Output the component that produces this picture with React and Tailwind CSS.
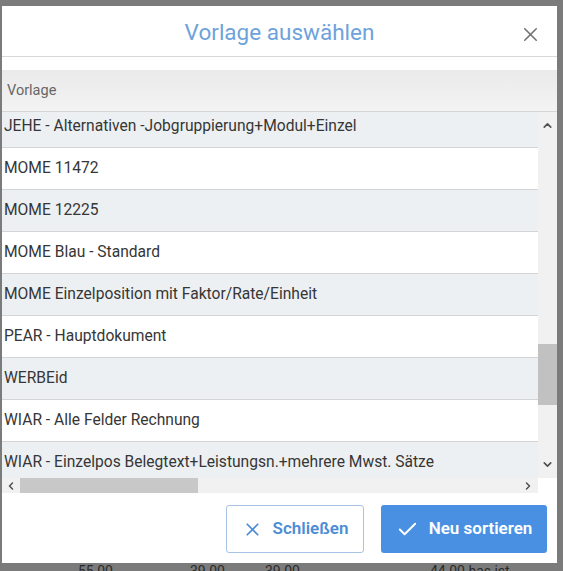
import { X, Check, ChevronUp, ChevronDown, ChevronLeft, ChevronRight } from "lucide-react";

const rows = [
  "JEHE - Alternativen -Jobgruppierung+Modul+Einzel",
  "MOME 11472",
  "MOME 12225",
  "MOME Blau - Standard",
  "MOME Einzelposition mit Faktor/Rate/Einheit",
  "PEAR - Hauptdokument",
  "WERBEid",
  "WIAR - Alle Felder Rechnung",
  "WIAR - Einzelpos Belegtext+Leistungsn.+mehrere Mwst. Sätze",
];

export default function App() {
  return (
    <div className="w-[563px] h-[571px] bg-[#7b7b7b] flex flex-col overflow-hidden font-['Roboto',sans-serif]">
      <div className="flex pt-[6px] pl-[2px]">
        <div className="w-[555px] h-[557px] bg-white flex flex-col">
          {/* header */}
          <div className="h-[51px] flex items-center relative border-b border-[#d8d8d8]">
            <h1 className="flex-1 text-center text-[22.5px] text-[#6ea2dc] pt-[4px]">
              Vorlage auswählen
            </h1>
            <button className="absolute right-[15px] top-[17px] text-[#707070]">
              <X size={23} strokeWidth={1.6} />
            </button>
          </div>
          <div className="h-[13px]" />
          {/* table header */}
          <div className="h-[42px] flex items-center pl-[5px] pt-[1px] bg-gradient-to-b from-[#eaeaea] to-[#f3f3f3] border-b border-[#d6d6d6] text-[14.5px] text-[#666]">
            Vorlage
          </div>
          {/* body */}
          <div className="flex h-[366px]">
            <div className="w-[536px] overflow-hidden">
              <div className="-mt-[6px]">
                {rows.map((r, i) => (
                  <div
                    key={r}
                    className={`h-[42px] flex items-center pl-[2px] border-b border-[#d4d4d4] text-[15.6px] text-[#363636] whitespace-nowrap ${
                      i % 2 === 0 ? "bg-[#edf0f2]" : "bg-white"
                    }`}
                  >
                    {r}
                  </div>
                ))}
              </div>
            </div>
            <div className="w-[19px] bg-[#f1f1f1] flex flex-col items-center">
              <ChevronUp size={13} strokeWidth={3} className="text-[#505050] mt-[7px]" />
              <div className="flex-1 w-full relative">
                <div className="absolute left-0 right-0 top-[212px] h-[61px] bg-[#c1c1c1]" />
              </div>
              <ChevronDown size={13} strokeWidth={3} className="text-[#505050] mb-[7px]" />
            </div>
          </div>
          {/* horizontal scrollbar */}
          <div className="flex h-[15px]">
            <div className="w-[536px] bg-[#f1f1f1] flex items-center">
              <ChevronLeft size={12} strokeWidth={3} className="text-[#505050] ml-[3px]" />
              <div className="w-[178px] h-[15px] bg-[#c8c8c8] ml-[3px]" />
              <div className="flex-1" />
              <ChevronRight size={12} strokeWidth={3} className="text-[#505050] mr-[4px]" />
            </div>
            <div className="w-[19px] bg-white" />
          </div>
          {/* footer */}
          <div className="flex-1 flex items-start justify-end gap-[17px] pt-[12px] pr-[10px]">
            <button className="w-[138px] h-[48px] flex items-center justify-center gap-[10px] border border-[#a7c3e6] rounded-[3px] text-[#4d8dd6] text-[17px] font-semibold">
              <X size={21} strokeWidth={2} />
              Schließen
            </button>
            <button className="w-[166px] h-[48px] flex items-center justify-center gap-[10px] bg-[#4a90e2] rounded-[3px] text-white text-[17px] font-semibold">
              <Check size={23} strokeWidth={2} />
              Neu sortieren
            </button>
          </div>
        </div>
      </div>
      <div className="h-[8px] overflow-hidden relative text-[14px] text-[#2a2a2a] leading-none">
        <span className="absolute left-[78px] top-[1px]">55 00</span>
        <span className="absolute left-[190px] top-[1px]">39 00</span>
        <span className="absolute left-[265px] top-[1px]">39 00</span>
        <span className="absolute left-[430px] top-[1px]">44 00 has ist</span>
      </div>
    </div>
  );
}
